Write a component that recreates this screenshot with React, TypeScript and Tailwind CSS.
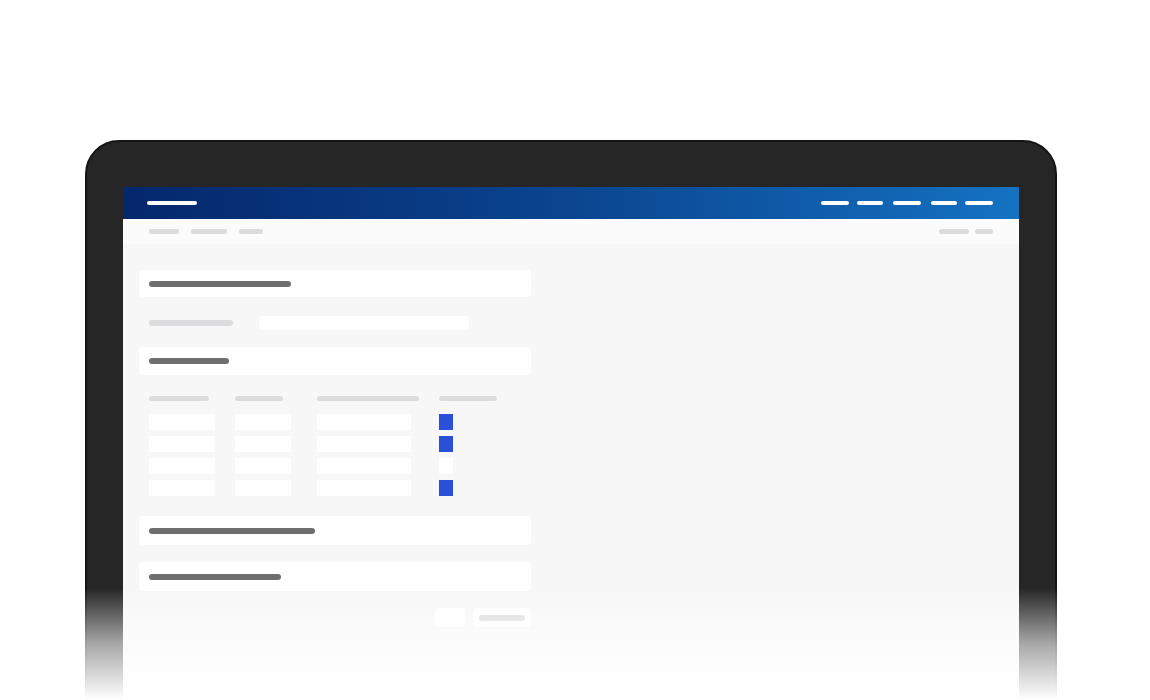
import React from "react";

const Pill = ({ w, h = "h-[5px]", c = "bg-[#dcdcde]" }: { w: string; h?: string; c?: string }) => (
  <div className={`${w} ${h} ${c} rounded-full`} />
);

function Card({ w, h }: { w: string; h: string }) {
  return (
    <div className={`${h} bg-white rounded-sm flex items-center pl-[10px]`}>
      <div className={`${w} h-[6px] bg-[#6e6e6e] rounded-full`} />
    </div>
  );
}

const rows = [true, true, false, true];

export default function App() {
  return (
    <div className="relative w-[1150px] h-[700px] overflow-hidden bg-white">
      <div className="ml-[85px] mt-[140px] w-[972px] h-[600px] bg-[#262626] border-2 border-[#141414] rounded-t-[34px] pl-[36px] pr-[36px] pt-[45px]">
        <div className="w-[896px] h-[560px] flex flex-col bg-[#f7f7f7]">
          {/* header */}
          <div className="h-[32px] flex items-center justify-between pl-[24px] pr-[26px] bg-linear-to-r from-[#05276b] via-[#0b4590] to-[#1572c2]">
            <div className="w-[50px] h-[4px] bg-white rounded-full" />
            <div className="flex items-center">
              <div className="w-[28px] h-[4px] bg-white rounded-full" />
              <div className="w-[26px] h-[4px] bg-white rounded-full ml-[8px]" />
              <div className="w-[28px] h-[4px] bg-white rounded-full ml-[10px]" />
              <div className="w-[26px] h-[4px] bg-white rounded-full ml-[10px]" />
              <div className="w-[28px] h-[4px] bg-white rounded-full ml-[8px]" />
            </div>
          </div>
          {/* breadcrumb */}
          <div className="h-[25px] flex items-center justify-between pl-[26px] pr-[26px] bg-[#fbfbfc]">
            <div className="flex items-center gap-[12px]">
              <Pill w="w-[30px]" />
              <Pill w="w-[36px]" />
              <Pill w="w-[24px]" />
            </div>
            <div className="flex items-center gap-[6px]">
              <Pill w="w-[30px]" />
              <Pill w="w-[18px]" />
            </div>
          </div>
          {/* content */}
          <div className="pl-[16px] pt-[26px] w-[408px] flex flex-col">
            <Card w="w-[142px]" h="h-[27px]" />
            <div className="mt-[19px] h-[14px] flex items-center pl-[10px]">
              <div className="w-[84px] h-[6px] bg-[#dcdcde] rounded-full" />
              <div className="ml-[26px] w-[210px] h-[14px] bg-white rounded-sm" />
            </div>
            <div className="mt-[17px]">
              <Card w="w-[80px]" h="h-[28px]" />
            </div>
            {/* table */}
            <div className="mt-[21px] pl-[10px] flex flex-col">
              <div className="flex items-center h-[5px]">
                <div className="w-[86px]"><Pill w="w-[60px]" /></div>
                <div className="w-[82px]"><Pill w="w-[48px]" /></div>
                <div className="w-[122px]"><Pill w="w-[102px]" /></div>
                <div><Pill w="w-[58px]" /></div>
              </div>
              <div className="mt-[13px] flex flex-col gap-[6px]">
                {rows.map((on, i) => (
                  <div key={i} className="flex h-[16px]">
                    <div className="w-[86px]"><div className="w-[66px] h-[16px] bg-white" /></div>
                    <div className="w-[82px]"><div className="w-[56px] h-[16px] bg-white" /></div>
                    <div className="w-[122px]"><div className="w-[94px] h-[16px] bg-white" /></div>
                    <div className={`w-[14px] h-[16px] ${on ? "bg-[#2b4fd8]" : "bg-white"}`} />
                  </div>
                ))}
              </div>
            </div>
            <div className="mt-[20px]">
              <Card w="w-[166px]" h="h-[29px]" />
            </div>
            <div className="mt-[17px]">
              <Card w="w-[132px]" h="h-[29px]" />
            </div>
            <div className="mt-[17px] flex justify-end gap-[8px]">
              <div className="w-[30px] h-[19px] bg-white rounded-sm" />
              <div className="w-[58px] h-[19px] bg-white rounded-sm flex items-center justify-center">
                <div className="w-[46px] h-[6px] bg-[#dcdcde] rounded-full" />
              </div>
            </div>
          </div>
        </div>
      </div>
      {/* bottom fade */}
      <div className="absolute left-0 right-0 bottom-0 h-[112px] bg-linear-to-b from-white/0 via-white/60 to-white pointer-events-none" />
    </div>
  );
}
